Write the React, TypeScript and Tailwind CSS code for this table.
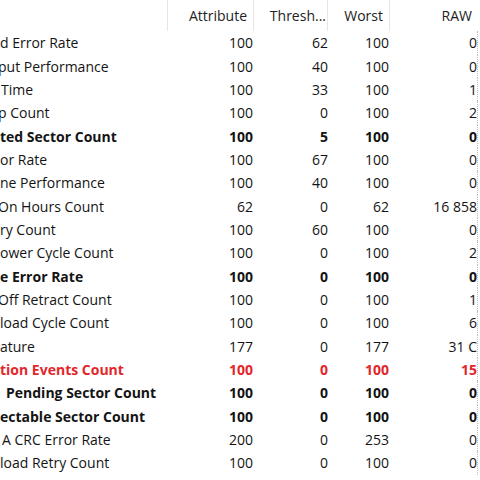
import React from "react";

type Row = {
  name: string;
  shift: string;
  attr: string;
  thresh: string;
  worst: string;
  raw: string;
  tone?: "bold" | "alert";
};

const rows: Row[] = [
  { name: "d Error Rate", shift: "ml-0", attr: "100", thresh: "62", worst: "100", raw: "0" },
  { name: "put Performance", shift: "-ml-[2px]", attr: "100", thresh: "40", worst: "100", raw: "0" },
  { name: "Time", shift: "ml-[1px]", attr: "100", thresh: "33", worst: "100", raw: "1" },
  { name: "p Count", shift: "-ml-[2px]", attr: "100", thresh: "0", worst: "100", raw: "2" },
  { name: "ted Sector Count", shift: "ml-0", attr: "100", thresh: "5", worst: "100", raw: "0", tone: "bold" },
  { name: "or Rate", shift: "ml-0", attr: "100", thresh: "67", worst: "100", raw: "0" },
  { name: "ne Performance", shift: "ml-0", attr: "100", thresh: "40", worst: "100", raw: "0" },
  { name: "On Hours Count", shift: "-ml-[2px]", attr: "62", thresh: "0", worst: "62", raw: "16 858" },
  { name: "ry Count", shift: "ml-0", attr: "100", thresh: "60", worst: "100", raw: "0" },
  { name: "ower Cycle Count", shift: "ml-0", attr: "100", thresh: "0", worst: "100", raw: "2" },
  { name: "e Error Rate", shift: "ml-0", attr: "100", thresh: "0", worst: "100", raw: "0", tone: "bold" },
  { name: "Off Retract Count", shift: "-ml-[2px]", attr: "100", thresh: "0", worst: "100", raw: "1" },
  { name: "load Cycle Count", shift: "ml-0", attr: "100", thresh: "0", worst: "100", raw: "6" },
  { name: "ature", shift: "ml-0", attr: "177", thresh: "0", worst: "177", raw: "31 C" },
  { name: "tion Events Count", shift: "ml-0", attr: "100", thresh: "0", worst: "100", raw: "15", tone: "alert" },
  { name: "Pending Sector Count", shift: "ml-[6px]", attr: "100", thresh: "0", worst: "100", raw: "0", tone: "bold" },
  { name: "ectable Sector Count", shift: "ml-0", attr: "100", thresh: "0", worst: "100", raw: "0", tone: "bold" },
  { name: "A CRC Error Rate", shift: "ml-[2px]", attr: "200", thresh: "0", worst: "253", raw: "0" },
  { name: "load Retry Count", shift: "ml-0", attr: "100", thresh: "0", worst: "100", raw: "0" },
];

const HeaderCell = ({ label, w, pr }: { label: string; w: string; pr: string }) => (
  <div className={`${w} h-full flex items-center justify-end border-r border-[#e5e5e5] ${pr} whitespace-nowrap`}>
    {label}
  </div>
);

const App: React.FC = () => {
  return (
    <div
      className="w-[480px] h-[480px] bg-white overflow-hidden text-[14px] text-[#141414] select-none"
      style={{ fontFamily: '"Open Sans", "Noto Sans", sans-serif' }}
    >
      {/* column header */}
      <div className="flex h-[31.33px] text-[#222]">
        <div className="w-[168px] h-full border-r border-[#e5e5e5]" />
        <HeaderCell label="Attribute" w="w-[86px]" pr="pr-[6px]" />
        <HeaderCell label="Thresh..." w="w-[74px]" pr="pr-[1px]" />
        <HeaderCell label="Worst" w="w-[62px]" pr="pr-[6px]" />
        <div className="w-[88px] h-full flex items-center justify-end pr-[6px]">RAW</div>
      </div>

      {rows.map((r, i) => {
        const tone =
          r.tone === "alert"
            ? "font-bold text-[#e3262b]"
            : r.tone === "bold"
            ? "font-bold"
            : "";
        return (
          <div key={i} className={`flex h-[23.33px] items-center ${tone}`}>
            <div className="w-[168px] overflow-hidden whitespace-nowrap">
              <span className={`block ${r.shift}`}>{r.name}</span>
            </div>
            <div className="w-[86px] text-right pr-[1px]">{r.attr}</div>
            <div className="w-[74px] text-right pr-0">{r.thresh}</div>
            <div className="w-[62px] text-right pr-[1px]">{r.worst}</div>
            <div className="w-[88px] h-full flex items-center justify-end border-r border-dotted border-[#bdbdbd] pr-0">
              {r.raw}
            </div>
          </div>
        );
      })}
    </div>
  );
};

export default App;
